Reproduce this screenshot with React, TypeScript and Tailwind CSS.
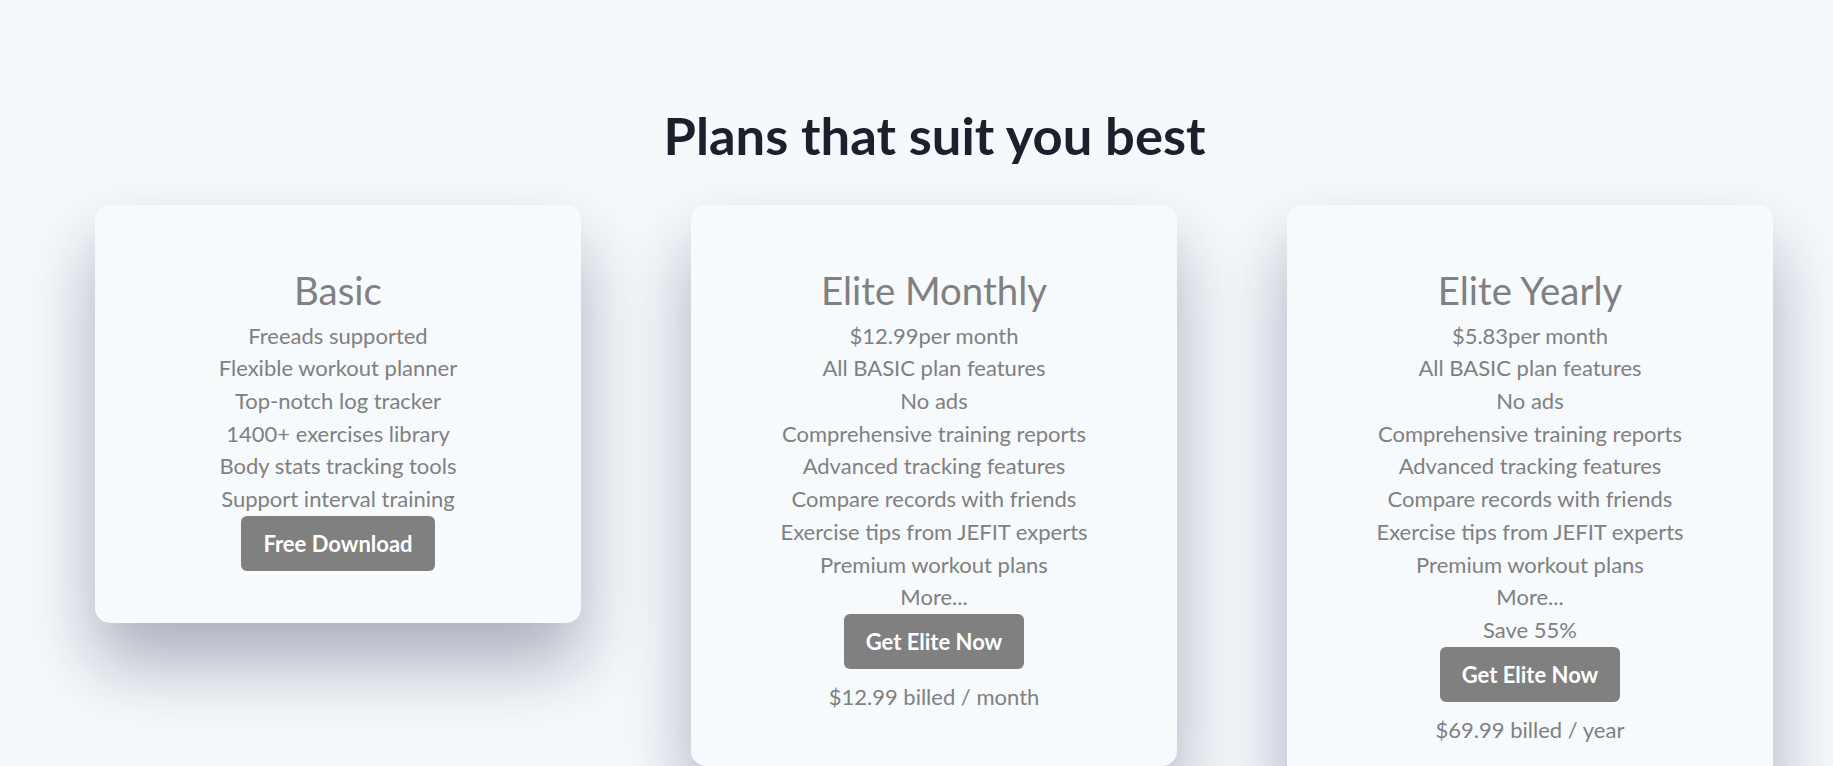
type Plan = {
  name: string;
  lines: string[];
  cta: string;
  billed?: string;
};

const plans: Plan[] = [
  {
    name: "Basic",
    lines: [
      "Freeads supported",
      "Flexible workout planner",
      "Top-notch log tracker",
      "1400+ exercises library",
      "Body stats tracking tools",
      "Support interval training",
    ],
    cta: "Free Download",
  },
  {
    name: "Elite Monthly",
    lines: [
      "$12.99per month",
      "All BASIC plan features",
      "No ads",
      "Comprehensive training reports",
      "Advanced tracking features",
      "Compare records with friends",
      "Exercise tips from JEFIT experts",
      "Premium workout plans",
      "More...",
    ],
    cta: "Get Elite Now",
    billed: "$12.99 billed / month",
  },
  {
    name: "Elite Yearly",
    lines: [
      "$5.83per month",
      "All BASIC plan features",
      "No ads",
      "Comprehensive training reports",
      "Advanced tracking features",
      "Compare records with friends",
      "Exercise tips from JEFIT experts",
      "Premium workout plans",
      "More...",
      "Save 55%",
    ],
    cta: "Get Elite Now",
    billed: "$69.99 billed / year",
  },
];

function PlanCard({ plan }: { plan: Plan }) {
  return (
    <div className="w-[486px] shrink-0 rounded-[15px] bg-[#f6fafd] pt-[57px] pb-[52px] text-center text-[#808080] shadow-[0_40px_70px_rgba(20,25,60,0.33)]">
      <h2 className="text-[38.4px] leading-[1.5]">{plan.name}</h2>
      {plan.lines.map((line) => (
        <p key={line} className="text-[22px] leading-[32.7px]">
          {line}
        </p>
      ))}
      <button className="rounded-[6px] bg-[#808080] px-[22px] py-[12px] text-[22px] leading-[31.2px] font-bold text-white">
        {plan.cta}
      </button>
      {plan.billed && (
        <p className="mt-[12px] text-[22px] leading-[32.7px]">{plan.billed}</p>
      )}
    </div>
  );
}

export default function App() {
  return (
    <div className="h-[766px] overflow-hidden bg-[#f5f9fc] font-['Lato',sans-serif]">
      {/* HEADING */}
      <h1 className="pt-[103px] pl-[36px] text-center text-[52.5px] leading-[1.2] font-bold text-[#1a202c]">
        Plans that suit you best
      </h1>
      {/* PLANS */}
      <div className="mt-[39px] flex items-start gap-[110px] pl-[95px]">
        {plans.map((plan) => (
          <PlanCard key={plan.name} plan={plan} />
        ))}
      </div>
    </div>
  );
}
